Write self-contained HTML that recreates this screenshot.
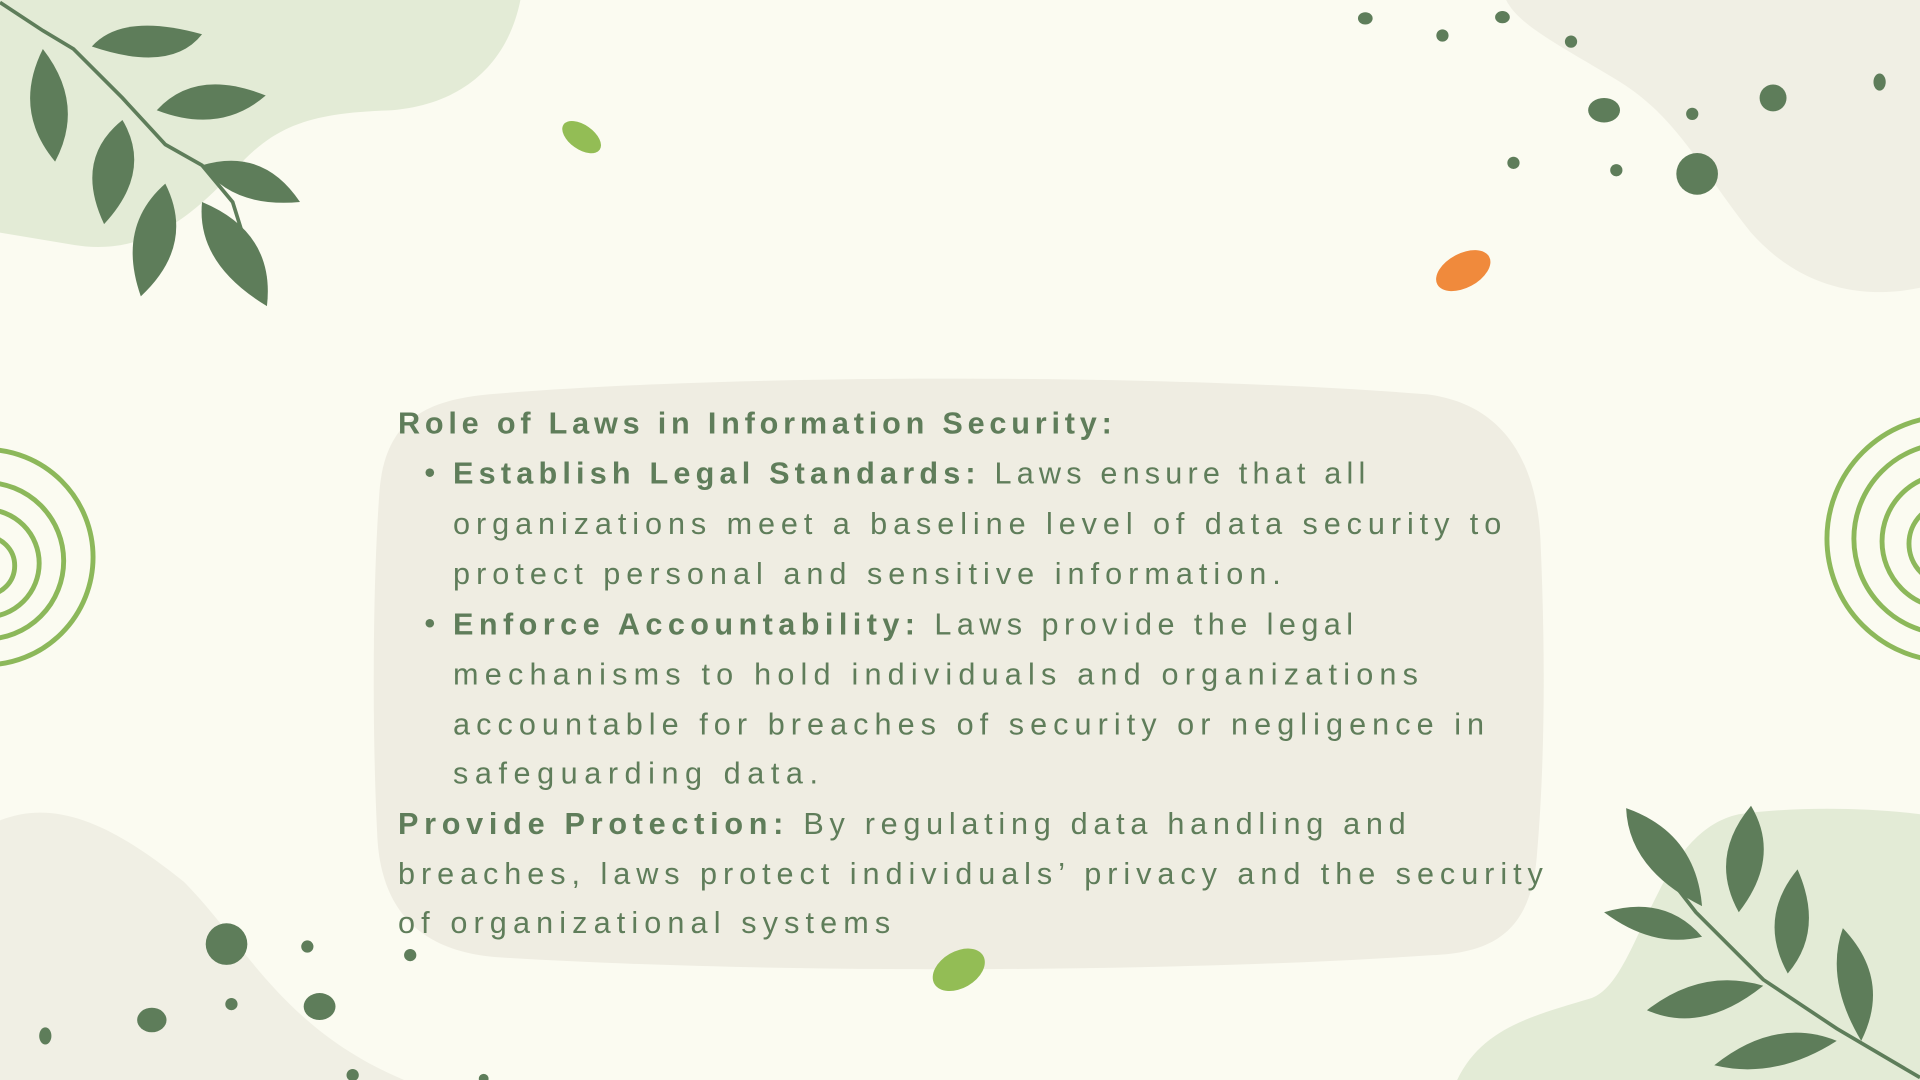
<!DOCTYPE html>
<html><head><meta charset="utf-8"><style>
html,body{margin:0;padding:0;background:#fbfbf1;}
svg{display:block;width:1920px;height:1080px;}
text{font-family:"Liberation Sans",sans-serif;font-size:25px;fill:#5f7d5a;}
.b{font-weight:bold;}
</style></head><body>
<svg viewBox="0 0 1568 882" preserveAspectRatio="none" xmlns="http://www.w3.org/2000/svg">
<rect width="1568" height="882" fill="#fbfbf1"/>
<path d="M0,0 H425 C415,50 380,85 320,90 C260,92 230,100 200,130 C160,175 120,210 60,200 L0,190 Z" fill="#e3ebd6"/>
<path d="M1230,0 H1568 V235 C1520,245 1470,235 1430,190 C1390,140 1370,95 1320,65 C1270,35 1240,20 1230,0Z" fill="#f0efe4"/>
<path d="M0,670 C50,650 100,680 150,720 C200,770 230,840 330,882 H0Z" fill="#f0efe4"/>
<path d="M1190,882 C1210,840 1250,830 1300,815 C1340,800 1350,680 1420,665 C1470,658 1530,660 1568,665 V882Z" fill="#e3ebd6"/>
<path d="M400,322 C600,305 950,305 1165,322 C1230,330 1255,380 1258,440 C1262,530 1262,620 1255,700 C1250,760 1220,778 1170,780 C950,795 620,795 410,782 C340,778 310,740 308,680 C304,600 304,480 310,400 C315,345 345,327 400,322Z" fill="#efede2"/>
<g fill="none" stroke="#8cb85a" stroke-width="4">
<circle cx="-12" cy="455" r="88"/><circle cx="-12" cy="458" r="64"/><circle cx="-12" cy="460" r="44"/><circle cx="-12" cy="462" r="24"/>
<circle cx="1592" cy="440" r="100"/><circle cx="1592" cy="440" r="78"/><circle cx="1592" cy="442" r="55"/><circle cx="1592" cy="444" r="33"/>
</g>
<g fill="#5e7d5a" stroke="#5e7d5a">
<path d="M0,2 L35,25 L60,40 L100,80 L135,118 L165,135 L190,165 L215,245" fill="none" stroke-width="3"/>
<path d="M1568,880 L1500,840 L1440,800 L1385,745 L1350,700" fill="none" stroke-width="3"/>
<g stroke="none">
<path d="M75,38 Q100,10 165,28 Q140,60 75,38Z"/>
<path d="M35,40 Q70,85 45,132 Q10,90 35,40Z"/>
<path d="M128,90 Q160,55 217,78 Q180,110 128,90Z"/>
<path d="M100,98 Q125,140 85,183 Q60,130 100,98Z"/>
<path d="M165,135 Q215,120 245,165 Q190,170 165,135Z"/>
<path d="M135,150 Q160,200 115,242 Q95,185 135,150Z"/>
<path d="M165,165 Q225,190 218,250 Q160,215 165,165Z"/>
<path d="M1390,740 Q1330,710 1328,660 Q1385,680 1390,740Z"/>
<path d="M1420,745 Q1395,700 1430,658 Q1455,700 1420,745Z"/>
<path d="M1390,765 Q1350,775 1310,745 Q1360,730 1390,765Z"/>
<path d="M1460,795 Q1435,750 1468,710 Q1490,760 1460,795Z"/>
<path d="M1440,805 Q1390,845 1345,825 Q1390,790 1440,805Z"/>
<path d="M1520,850 Q1490,800 1505,758 Q1545,800 1520,850Z"/>
<path d="M1500,850 Q1450,882 1400,870 Q1450,830 1500,850Z"/>
<ellipse cx="1115" cy="15" rx="6" ry="5"/><circle cx="1178" cy="29" r="5"/><ellipse cx="1227" cy="14" rx="6" ry="5"/><circle cx="1283" cy="34" r="5"/>
<ellipse cx="1310" cy="90" rx="13" ry="10"/><circle cx="1382" cy="93" r="5"/><circle cx="1448" cy="80" r="11"/><ellipse cx="1535" cy="67" rx="5" ry="7"/>
<circle cx="1236" cy="133" r="5"/><circle cx="1320" cy="139" r="5"/><circle cx="1386" cy="142" r="17"/>
<circle cx="185" cy="771" r="17"/><circle cx="251" cy="773" r="5"/><circle cx="335" cy="780" r="5"/><ellipse cx="124" cy="833" rx="12" ry="10"/>
<ellipse cx="261" cy="822" rx="13" ry="11"/><circle cx="189" cy="820" r="5"/><ellipse cx="37" cy="846" rx="5" ry="7"/><circle cx="288" cy="878" r="5"/><circle cx="395" cy="881" r="4"/>
</g></g>
<ellipse cx="475" cy="112" rx="18" ry="10" transform="rotate(35 475 112)" fill="#93bd55"/>
<ellipse cx="783" cy="792" rx="23" ry="15" transform="rotate(-30 783 792)" fill="#93bd55"/>
<ellipse cx="1195" cy="221" rx="24" ry="14" transform="rotate(-28 1195 221)" fill="#f08a3c"/>
<circle cx="351" cy="386" r="3.5" fill="#5f7d5a"/><circle cx="351" cy="509" r="3.5" fill="#5f7d5a"/>
<text x="325" y="354" textLength="583" lengthAdjust="spacing" class="b">Role of Laws in Information Security:</text>
<text x="370" y="395" textLength="745" lengthAdjust="spacing"><tspan class="b">Establish Legal Standards:</tspan> Laws ensure that all</text>
<text x="370" y="436" textLength="856" lengthAdjust="spacing">organizations meet a baseline level of data security to</text>
<text x="370" y="477" textLength="676" lengthAdjust="spacing">protect personal and sensitive information.</text>
<text x="370" y="518" textLength="735" lengthAdjust="spacing"><tspan class="b">Enforce Accountability:</tspan> Laws provide the legal</text>
<text x="370" y="559" textLength="788" lengthAdjust="spacing">mechanisms to hold individuals and organizations</text>
<text x="370" y="600" textLength="842" lengthAdjust="spacing">accountable for breaches of security or negligence in</text>
<text x="370" y="640" textLength="298" lengthAdjust="spacing">safeguarding data.</text>
<text x="325" y="681" textLength="823" lengthAdjust="spacing"><tspan class="b">Provide Protection:</tspan> By regulating data handling and</text>
<text x="325" y="722" textLength="935" lengthAdjust="spacing">breaches, laws protect individuals’ privacy and the security</text>
<text x="325" y="762" textLength="402" lengthAdjust="spacing">of organizational systems</text>
</svg>
</body></html>
